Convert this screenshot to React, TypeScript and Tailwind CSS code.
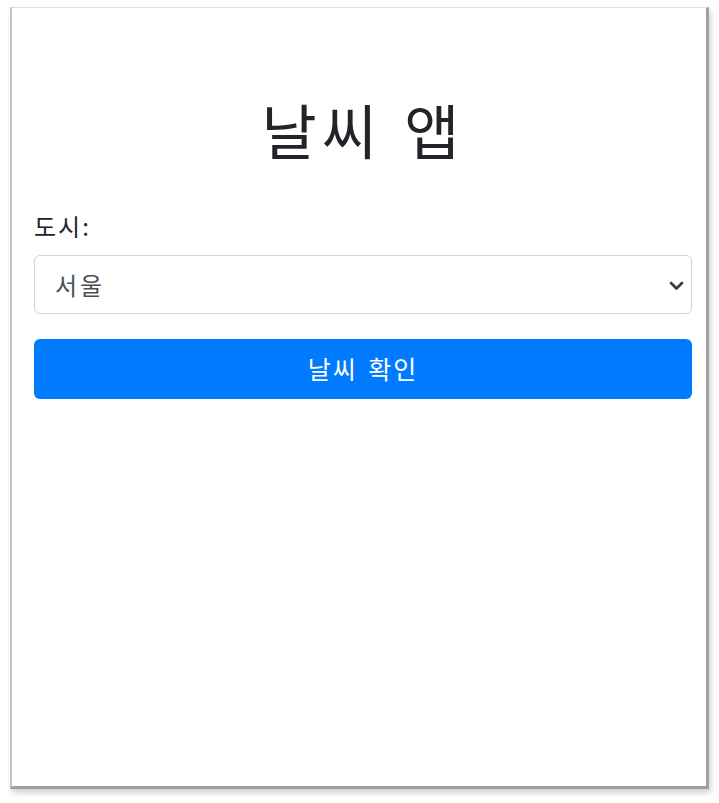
import React from "react";

export default function App() {
  const font = { fontFamily: '"Noto Sans CJK KR", "Noto Sans", sans-serif' };
  return (
    <div className="w-[719px] h-[803px] bg-white overflow-hidden" style={font}>
      <div className="ml-[10px] mt-[7px] w-[699px] h-[782px] bg-white border-t border-t-[#e2e2e2] border-l-2 border-l-[#c4c4c4] border-r-[3px] border-r-[#a0a0a0] border-b-[3px] border-b-[#a0a0a0] shadow-[2px_4px_6px_rgba(0,0,0,0.18)]">
        <div className="pl-[22px] pr-[14px] pt-[85px]">
          <h1 className="text-center text-[60px] leading-[72px] text-[#212529] font-normal tracking-[5px] [word-spacing:4px]">날씨 앱</h1>
          <div className="mt-[43px] text-[24px] leading-[36px] text-[#212529] tracking-[2px]">도시:</div>
          <div className="mt-[11px] relative h-[59px] rounded-[6px] border border-[#ced4da] flex items-center pl-[20px]">
            <span className="text-[24px] text-[#495057] tracking-[3px]">서울</span>
            <svg className="absolute right-[7px] top-[25px]" width="15" height="10" viewBox="0 0 15 10">
              <path d="M2 2 L7.5 7.5 L13 2" fill="none" stroke="#343a40" strokeWidth="2.6" strokeLinecap="round" strokeLinejoin="round" />
            </svg>
          </div>
          <button className="mt-[25px] w-full h-[60px] rounded-[6px] bg-[#007bff] text-white text-[25px] flex items-center justify-center tracking-[2px] [word-spacing:3px]">
            날씨 확인
          </button>
        </div>
      </div>
    </div>
  );
}
